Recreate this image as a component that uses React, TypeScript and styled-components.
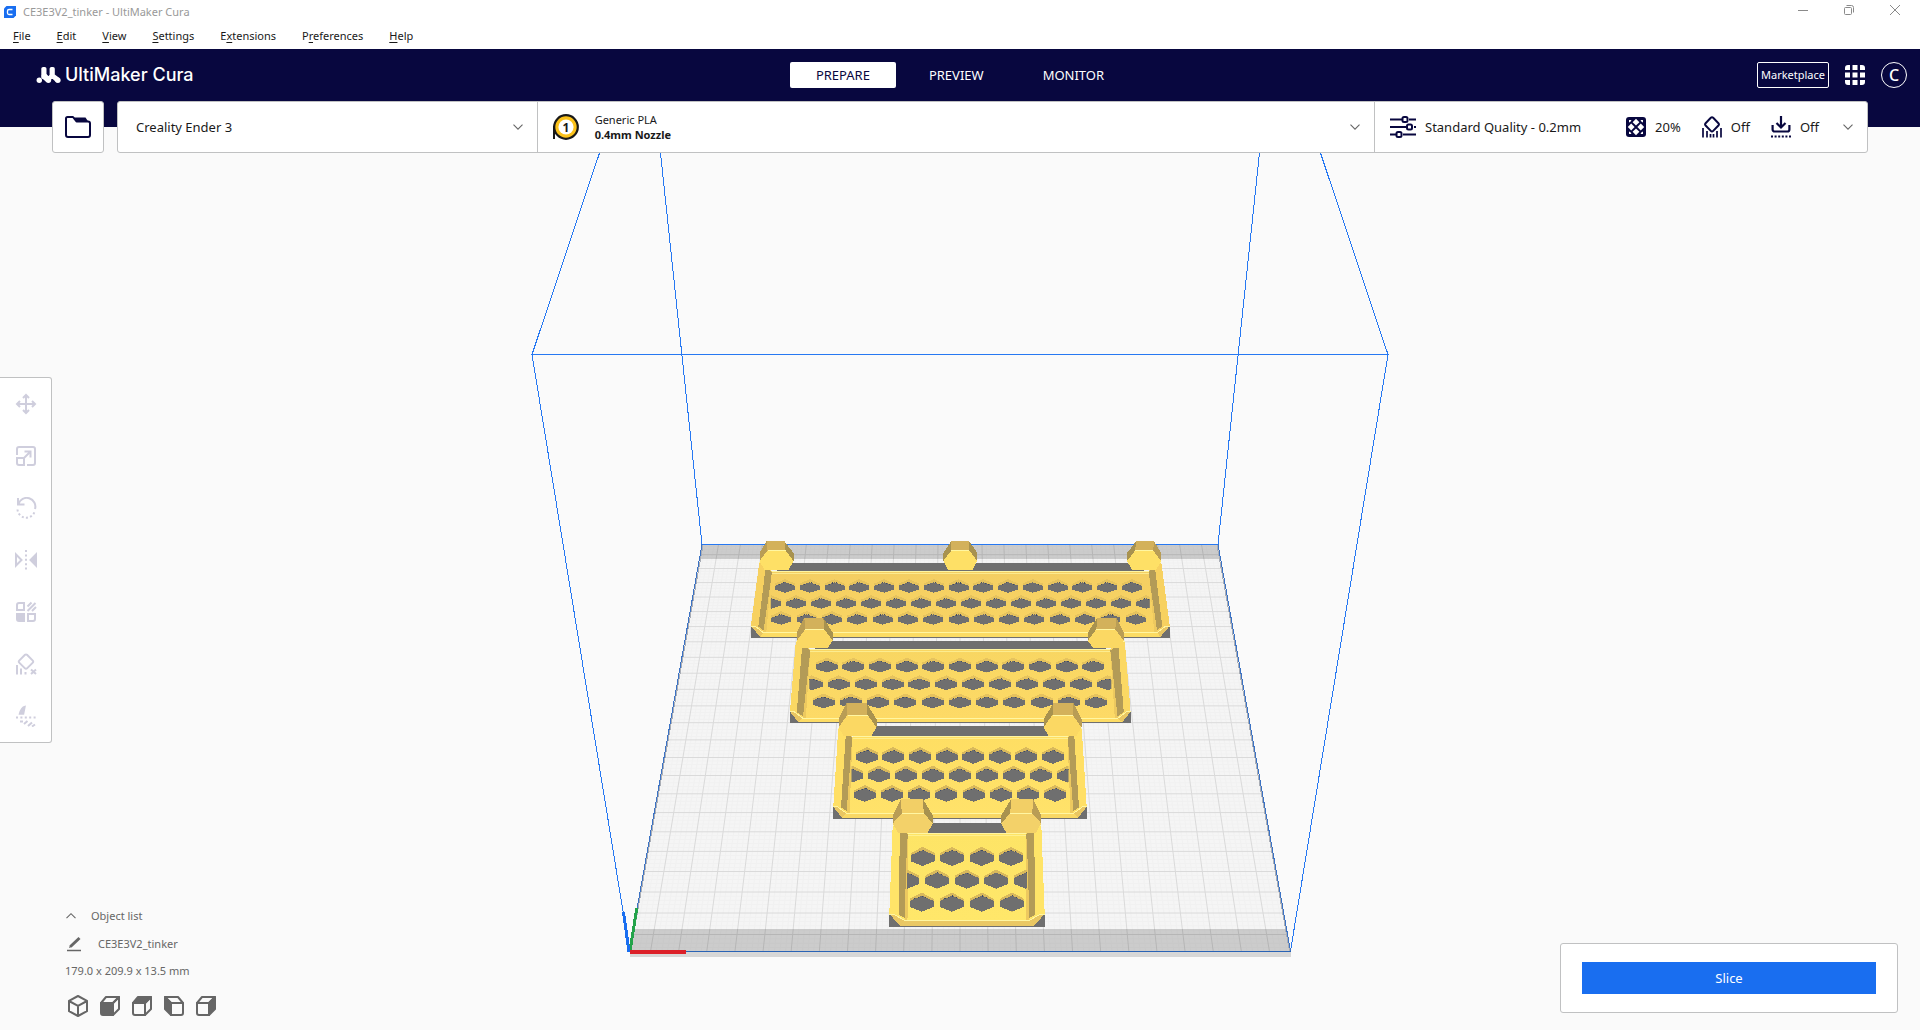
import React from "react";
import styled, { createGlobalStyle } from "styled-components";

const navy = "#08073f";
const blue = "#196ef0";
const line = "#c0c1c2";
const muted = "#666666";
const disabled = "#cfcedd";

const Global = createGlobalStyle`
  * { box-sizing: border-box; }
  body { margin: 0; background: #fafafa; }
  button { font: inherit; color: inherit; margin: 0; padding: 0; border: 0; background: none; cursor: pointer; }
  svg { display: block; flex: none; }
`;

const Page = styled.div`
  display: flex;
  flex-direction: column;
  min-height: 100vh;
  font-family: "Noto Sans", "Open Sans", sans-serif;
  font-size: 11px;
  line-height: 16px;
  color: #191919;
`;

/* ---------- window frame ---------- */

const TitleBar = styled.div`
  display: flex;
  align-items: center;
  height: 23px;
  padding-left: 4px;
  gap: 7px;
  background: #fff;
  color: #999;
`;

const WindowTitle = styled.span`
  flex: 1;
`;

const WindowButton = styled.button`
  display: grid;
  place-items: center;
  width: 39px;
  height: 20px;
  color: #8a8a8a;
`;

const WindowButtons = styled.div`
  display: flex;
  align-self: flex-start;
  gap: 7px;
  padding-right: 6px;
`;

const MenuBar = styled.nav`
  display: flex;
  height: 26px;
  background: #fff;
`;

const MenuItem = styled.button`
  padding: 0 13px;
  u { text-underline-offset: 2px; }
`;

/* ---------- header ---------- */

const Header = styled.header`
  display: grid;
  grid-template-columns: 1fr auto 1fr;
  align-items: center;
  height: 52px;
  padding: 0 13px;
  background: ${navy};
  color: #fff;
`;

const Brand = styled.div`
  display: flex;
  align-items: center;
  gap: 3px;
  padding-left: 23px;
  font-family: Inter, "Noto Sans", sans-serif;
  font-size: 18px;
  font-weight: 500;
  line-height: 28px;
`;

const Tabs = styled.nav`
  display: flex;
  gap: 7px;
`;

const Tab = styled.button<{ $active?: boolean }>`
  height: 26px;
  padding: 0 26px;
  border-radius: 2px;
  font-size: 13px;
  background: ${(p) => (p.$active ? "#fff" : "transparent")};
  color: ${(p) => (p.$active ? navy : "#fff")};
`;

const Account = styled.div`
  display: flex;
  justify-content: flex-end;
  gap: 13px;
`;

const Marketplace = styled.button`
  width: 72px;
  height: 26px;
  border: 1px solid #fff;
  border-radius: 2px;
`;

const RoundButton = styled.button<{ $ring?: boolean }>`
  display: grid;
  place-items: center;
  width: 26px;
  height: 26px;
  border-radius: 50%;
  border: ${(p) => (p.$ring ? "1px solid #fff" : "0")};
  font-size: 16px;
  font-weight: 500;
`;

/* ---------- stage bar ---------- */

const StageRow = styled.div`
  display: flex;
  gap: 13px;
  padding: 0 52px;
  background: linear-gradient(${navy} 26px, #fafafa 26px);
`;

const OpenButton = styled.button`
  display: grid;
  place-items: center;
  width: 52px;
  height: 52px;
  background: #fff;
  border: 1px solid ${line};
  border-radius: 3px;
`;

const StageBar = styled.div`
  display: grid;
  grid-template-columns: 1fr 2fr 493px;
  flex: 1;
  height: 52px;
  background: #fff;
  border: 1px solid ${line};
  border-radius: 3px;
`;

const Selector = styled.button<{ $pad: number; $gap?: number }>`
  display: flex;
  align-items: center;
  gap: ${(p) => p.$gap ?? 0}px;
  padding: 0 13px 0 ${(p) => p.$pad}px;
  text-align: left;
  font-size: 13px;
  & + & { border-left: 1px solid ${line}; }
`;

const Grow = styled.span`
  flex: 1;
`;

const Material = styled.span`
  flex: 1;
  font-size: 11px;
  line-height: 15px;
  strong { display: block; font-weight: 700; }
`;

const Settings = styled.span`
  display: flex;
  gap: 21px;
  margin-right: 14px;
`;

const Setting = styled.span`
  display: flex;
  align-items: center;
  gap: 9px;
`;

/* ---------- viewport ---------- */

const Viewport = styled.main`
  position: relative;
  display: flex;
  flex: 1;
  justify-content: space-between;
  min-height: 640px;
  background: #fafafa;
`;

const SceneSvg = styled.svg`
  position: absolute;
  inset: 0;
  width: 100%;
  height: 100%;
`;

const LeftColumn = styled.div`
  position: relative;
  display: flex;
  flex-direction: column;
  align-items: flex-start;
  justify-content: space-between;
  padding-top: 224px;
`;

const Toolbar = styled.div`
  display: flex;
  flex-direction: column;
  background: #fff;
  border: 1px solid ${line};
  border-left: 0;
  border-radius: 0 3px 3px 0;
`;

const Tool = styled.button`
  display: grid;
  place-items: center;
  width: 51px;
  height: 52px;
  color: ${disabled};
`;

const ObjectPanel = styled.section`
  display: flex;
  flex-direction: column;
  align-items: flex-start;
  gap: 10px;
  padding: 0 0 11px 65px;
  color: ${muted};
`;

const ObjectRow = styled.button<{ $gap: number }>`
  display: flex;
  align-items: center;
  gap: ${(p) => p.$gap}px;
  height: 18px;
`;

const Views = styled.div`
  display: flex;
  gap: 6px;
  margin-top: 4px;
`;

const ViewButton = styled.button`
  display: grid;
  place-items: center;
  width: 26px;
  height: 26px;
`;

const SlicePanel = styled.section`
  position: relative;
  align-self: flex-end;
  width: 338px;
  margin: 0 22px 17px 0;
  padding: 18px 21px;
  background: #fff;
  border: 1px solid ${line};
  border-radius: 3px;
`;

const SliceButton = styled.button`
  display: block;
  width: 100%;
  height: 32px;
  background: ${blue};
  color: #fff;
  font-size: 13px;
`;

/* ---------- icons ---------- */

const Chevron = ({ up }: { up?: boolean }) => (
  <svg width="12" height="12" viewBox="0 0 12 12" fill="none" stroke={muted} strokeWidth="1.1">
    <path d={up ? "M1.5 8.2 6 3.7l4.5 4.5" : "M1.5 3.7 6 8.2l4.5-4.5"} />
  </svg>
);

const AppIcon = () => (
  <svg width="12" height="12" viewBox="0 0 12 12">
    <path d="M2.5 0H12v9.5L9.5 12H0V2.5z" fill={blue} />
    <path d="M8.500 3.500H5A1.500 1.500 0 0 0 3.500 5v2A1.500 1.500 0 0 0 5 8.500h3.500" fill="none" stroke="#fff" strokeWidth="1.3" />
  </svg>
);

const Logo = () => (
  <svg width="26" height="18" viewBox="0 0 26 18" fill="#fff">
    <circle cx="3.300" cy="14.300" r="2.700" />
    <rect x="5.300" y="1" width="5.200" height="12" rx="1.800" />
    <rect x="13.600" y="1" width="5.200" height="12" rx="1.800" />
    <circle cx="12.400" cy="14.300" r="2.700" />
    <circle cx="21.900" cy="14.300" r="2.700" />
    <path d="M5.300 9.500L10.500 8l3.300 3.800-3.500 4.200-4-3.500zM10.600 11.800L13.600 9h3l-1.500 5zM14.600 11L18.800 8.500l4.600 3.500-3 4.500z" />
  </svg>
);

const Apps = () => (
  <svg width="20" height="20" viewBox="0 0 20 20" fill="#fff">
    <path d="M3 0h2v5H0V3a3 3 0 0 1 3-3zM7.500 0h5v5h-5zM15 0h2a3 3 0 0 1 3 3v2h-5zM0 7.500h5v5H0zM7.500 7.500h5v5h-5zM15 7.500h5v5h-5zM0 15h5v5H3a3 3 0 0 1-3-3zM7.500 15h5v5h-5zM15 15h5v2a3 3 0 0 1-3 3h-2z" />
  </svg>
);

const Folder = () => (
  <svg width="26" height="22" viewBox="0 0 26 22">
    <path d="M1 2.500A1.500 1.500 0 0 1 2.500 1H8l3.500 4.500H23A2 2 0 0 1 25 7.500v11.500a2 2 0 0 1-2 2H3a2 2 0 0 1-2-2z" fill="#fff" stroke={navy} strokeWidth="2" strokeLinejoin="round" />
    <path d="M9 1.500h11.500l3 4.500H12z" fill={navy} />
  </svg>
);

const Spool = () => (
  <svg width="26" height="26" viewBox="0 0 26 26">
    <path d="M1 12v13" stroke="#191919" strokeWidth="2" />
    <circle cx="13" cy="13" r="11.800" fill="#fbc21b" stroke="#191919" strokeWidth="2.200" />
    <circle cx="13" cy="13" r="7.600" fill="#fff" />
    <text x="13" y="17.500" textAnchor="middle" fontSize="12" fontWeight="700" fill="#191919">1</text>
  </svg>
);

const Sliders = () => (
  <svg width="26" height="22" viewBox="0 0 26 22" fill="none" stroke={navy} strokeWidth="2">
    <path d="M0 3.500h12M19 3.500h7M0 11h16M24 11H26M0 18.500h6M13 18.500h13" />
    <rect x="12.500" y="1" width="5" height="5" rx="1.500" />
    <rect x="17" y="8.500" width="5" height="5" rx="1.500" />
    <rect x="6.500" y="16" width="5" height="5" rx="1.500" />
  </svg>
);

const Infill = () => (
  <svg width="20" height="20" viewBox="0 0 20 20">
    <rect width="20" height="20" rx="3" fill={navy} />
    <g fill="#fff">
      {[
        [10, 5.2, 3.4],
        [5.2, 10, 3.4],
        [14.8, 10, 3.4],
        [10, 14.8, 3.4],
      ].map(([x, y, r], i) => (
        <path key={i} d={`M${x} ${y - r}l${r} ${r}-${r} ${r}-${r}-${r}z`} />
      ))}
      <path d="M3 5.500V3h2.500l-1 1.800zM14.500 3H17v2.500l-1.500-.700zM3 14.500V17h2.500l-1-1.800zM17 14.500V17h-2.500l1-1.800z" />
    </g>
  </svg>
);

const Support = () => (
  <svg width="20" height="22" viewBox="0 0 20 22" fill="none" stroke={navy} strokeWidth="2">
    <path d="M8.800 1.800a1.700 1.700 0 0 1 2.400 0l5.200 5.400a1.700 1.700 0 0 1 0 2.300l-5.200 5.400a1.700 1.700 0 0 1-2.400 0L3.600 9.500a1.700 1.700 0 0 1 0-2.300z" />
    <path d="M1 12v9.500M5 15v6.500M8.500 18v3.500M11.500 18v3.500M15 15v6.500M19 12v9.500" strokeWidth="1.700" />
  </svg>
);

const Adhesion = () => (
  <svg width="20" height="22" viewBox="0 0 20 22" fill="none" stroke={navy} strokeWidth="2.200">
    <path d="M10 0v11M5.500 7l4.500 4.500L14.500 7M1.600 9v4.500a2 2 0 0 0 2 2h12.800a2 2 0 0 0 2-2V9" />
    <path d="M0 20.500h20" strokeWidth="1.900" strokeDasharray="2 1.600" />
  </svg>
);

const Svg20 = ({ children }: { children: React.ReactNode }) => (
  <svg width="22" height="22" viewBox="-1 -1 22 22" fill="none" stroke="currentColor" strokeWidth="2">
    {children}
  </svg>
);

const tools: [string, React.ReactNode][] = [
  ["Move", <path d="M10 1.500v17M1.500 10h17M7 4l3-3 3 3M7 16l3 3 3-3M4 7l-3 3 3 3M16 7l3 3-3 3" />],
  [
    "Scale",
    <>
      <path d="M1 9V3a2 2 0 0 1 2-2h14a2 2 0 0 1 2 2v14a2 2 0 0 1-2 2h-6" />
      <path d="M1 12h7v7H3a2 2 0 0 1-2-2zM8 12l6.500-6.500M8.500 5.500h6v6" />
    </>,
  ],
  [
    "Rotate",
    <>
      <path d="M2 0v6.500h6.500M2.500 6A8.500 8.500 0 0 1 19 11" />
      <path d="M1.500 11.500A8.800 8.800 0 0 0 18.500 14" strokeDasharray="2 2.200" />
    </>,
  ],
  [
    "Mirror",
    <>
      <path d="M0 4.500v11L5.500 10z" />
      <path d="M20 4.500v11L14.500 10z" fill="currentColor" />
      <path d="M10 0v20" strokeDasharray="2 2.400" />
    </>,
  ],
  [
    "Per model settings",
    <>
      <path d="M3 1h5v7H1V3a2 2 0 0 1 2-2zM12 12h7v5a2 2 0 0 1-2 2h-5z" />
      <path d="M3 12h5v7H3a2 2 0 0 1-2-2v-5z" fill="currentColor" />
      <path d="M11.500 4.500l4-4M11.500 9l8-8M16 9l4-4" />
    </>,
  ],
  [
    "Support blocker",
    <>
      <path d="M9 .800a1.400 1.400 0 0 1 2 0l5.800 5.800a1.400 1.400 0 0 1 0 2L11 14.400a1.400 1.400 0 0 1-2 0L3.200 8.600a1.400 1.400 0 0 1 0-2z" />
      <path d="M1 11v9.500M5 14.500v6M9.500 18v2.500M15 15.500l5 4.500M20 15.500L15 20" />
    </>,
  ],
  [
    "Split",
    <>
      <path d="M3.500 8C4.500 4 6.500 1 9 .500L7.500 8z" fill="currentColor" strokeWidth="1.5" />
      <path d="M0 11.500h20" strokeDasharray="2 2.400" />
      <path d="M4 15.500h3M8 18l3.500-3M12 20l4-3.500M16 20.500l3-2" />
    </>,
  ],
];

const viewNames = ["3D view", "Front view", "Top view", "Left view", "Right view"];

const Cube = ({ kind }: { kind: number }) => {
  if (kind === 0)
    return (
      <Svg20>
        <path d="M10 0l9 4.800v10.400L10 20l-9-4.800V4.800zM1 5l9 4.800L19 5M10 9.800V20" strokeLinejoin="round" />
      </Svg20>
    );
  const flip = kind === 3;
  return (
    <Svg20>
      <g transform={flip ? "matrix(-1 0 0 1 20 0)" : undefined} strokeLinejoin="round">
        <path d="M1 7h12v12H3a2 2 0 0 1-2-2z" fill={kind === 1 ? "currentColor" : "none"} />
        <path d="M1 7l5-6h13l-6 6z" fill={kind === 2 ? "currentColor" : "none"} />
        <path d="M13 7l6-6v12l-6 6z" fill={kind > 2 ? "currentColor" : "none"} />
      </g>
    </Svg20>
  );
};

/* ---------- 3D scene ---------- */

type Row = { y: number; from: number; to: number; n: number; ends?: boolean };
type Model = {
  cx: number;
  face: [string, string];
  rim: string;
  bevel: string;
  strip: number;
  rimTop: number;
  inTop: number;
  corner: number;
  inBottom: number;
  bottom: number;
  outer: [number, number];
  wallOut: [number, number];
  wallIn: [number, number];
  flat: number;
  hooks: number[];
  hookY: [number, number, number, number];
  hookW: [number, number];
  hole: [number, number];
  rows: Row[];
};

const models: Model[] = [
  {
    cx: 960.3, face: ["#f4ce62", "#f9d563"], rim: "#f7d160", bevel: "#fcdc63", strip: 563,
    rimTop: 562.3, inTop: 571, corner: 626, inBottom: 632.5, bottom: 637,
    outer: [201, 209.5], wallOut: [194.5, 202], wallIn: [188.5, 195], flat: 200,
    hooks: [-183.8, 0, 183.8], hookY: [541.3, 550.5, 561, 570], hookW: [9, 17],
    hole: [10, 5.2],
    rows: [
      { y: 587.5, from: 785, to: 1132, n: 15 },
      { y: 603.5, from: 796.3, to: 1121.3, n: 14, ends: true },
      { y: 619.5, from: 781.3, to: 1135.7, n: 15 },
    ],
  },
  {
    cx: 960.3, face: ["#f8d662", "#fdda66"], rim: "#fbd863", bevel: "#fddc64", strip: 641.3,
    rimTop: 641.3, inTop: 649.5, corner: 711.7, inBottom: 718.3, bottom: 722,
    outer: [164.5, 170.3], wallOut: [158, 163.5], wallIn: [150, 155.5], flat: 162,
    hooks: [-145.5, 145.5], hookY: [617.7, 629.3, 640.7, 647.7], hookW: [9.5, 18],
    hole: [11, 5.8],
    rows: [
      { y: 666.7, from: 826.7, to: 1093.3, n: 11 },
      { y: 684.3, from: 838.7, to: 1081, n: 10, ends: true },
      { y: 702.5, from: 823.7, to: 1096, n: 11 },
    ],
  },
  {
    cx: 960, face: ["#fede63", "#ffe26a"], rim: "#ffdf65", bevel: "#f9d864", strip: 726,
    rimTop: 728, inTop: 736.7, corner: 806.7, inBottom: 813.3, bottom: 818,
    outer: [121.7, 126.7], wallOut: [114, 119], wallIn: [107.5, 111.5], flat: 118,
    hooks: [-102.5, 102.5], hookY: [703, 715, 727.3, 735.7], hookW: [10, 19],
    hole: [11, 6.8],
    rows: [
      { y: 757, from: 866.7, to: 1053, n: 8 },
      { y: 775.7, from: 879, to: 1040.7, n: 7, ends: true },
      { y: 795, from: 864.7, to: 1055.3, n: 8 },
    ],
  },
  {
    cx: 967, face: ["#fde466", "#ffe76a"], rim: "#ffe468", bevel: "#eac864", strip: 822.7,
    rimTop: 825, inTop: 833.3, corner: 914, inBottom: 920.3, bottom: 925.5,
    outer: [74.3, 77.7], wallOut: [67, 68.5], wallIn: [59, 60.5], flat: 67,
    hooks: [-54.2, 54.2], hookY: [799, 813.3, 823.3, 832.7], hookW: [11, 20],
    hole: [12, 8],
    rows: [
      { y: 858, from: 922.7, to: 1011, n: 4 },
      { y: 880.7, from: 937, to: 996.3, n: 3, ends: true },
      { y: 903.7, from: 921.7, to: 1012, n: 4 },
    ],
  },
];

const dark = "#6f6f6f";
const shine = "#fff6a2";

const hex = (x: number, y: number, w: number, h: number) =>
  `M${x} ${y - h}L${x + w} ${y - h * 0.35}V${y + h * 0.4}L${x} ${y + h}L${x - w} ${y + h * 0.4}V${y - h * 0.35}Z`;

const Hook = ({ x, m, i }: { x: number; m: Model; i: number }) => {
  const [t, f, mid, b] = m.hookY;
  const [n, w] = m.hookW;
  const off = x < m.cx - 5 ? -1 : x > m.cx + 5 ? 1 : 0;
  const topY = mid - 8;
  return (
    <g>
      <path d={`M${x - n + off} ${t}H${x + n + off}L${x + w} ${topY}V${mid}L${x + w - 5} ${b}H${x - w + 5}L${x - w} ${mid}V${topY}Z`} fill="#a8924f" />
      <path d={`M${x - n + off} ${t}H${x + n + off}L${x + n} ${f}H${x - n}Z`} fill={i === 3 ? "#f2cf66" : "#d3b15b"} />
      {off !== 0 && (
        <path d={`M${x + off * n + off} ${t}L${x + off * n} ${f}L${x + off * w} ${mid}V${topY}Z`} fill="#b99d55" />
      )}
      <path d={`M${x - n} ${f}H${x + n}L${x + w} ${mid}L${x + w - 5} ${b}H${x - w + 5}L${x - w} ${mid}Z`} fill={i === 0 ? "#fee066" : i === 3 ? "#f3d169" : "#fbd863"} />
      <path d={`M${x - n} ${f}H${x + n}`} stroke={shine} strokeWidth="1" />
    </g>
  );
};

const Part = ({ m, i }: { m: Model; i: number }) => {
  const { cx } = m;
  const [o1, o2] = m.outer;
  const [hw, hh] = m.hole;
  const first = Math.abs(m.hooks[0]);
  const inner = m.wallIn[0];
  const foot = m.wallIn[1] + 2;
  const wall = (s: number) =>
    `M${cx + s * m.wallOut[0]} ${m.inTop - 5}L${cx + s * inner} ${m.inTop + 1}L${cx + s * m.wallIn[1]} ${m.inBottom - 1}L${cx + s * m.wallOut[1]} ${m.inBottom - 6}Z`;
  const lip = (s: number) =>
    `M${cx + s * inner} ${m.inTop + 1}L${cx + s * (m.wallIn[1] - 1)} ${m.inBottom}H${cx + s * foot}L${cx + s * (inner + 1)} ${m.inTop + 10}Z`;
  return (
    <g>
      <path d={`M${cx - o2} ${m.corner}H${cx + o2}V${m.bottom + 1}H${cx - o2}Z`} fill={dark} />
      <path d={`M${cx - first} ${m.strip}H${cx + first}V${m.inTop}H${cx - first}Z`} fill={dark} />
      <path
        d={`M${cx - o1} ${m.rimTop}H${cx - m.wallOut[0]}L${cx - inner} ${m.inTop}H${cx + inner}L${cx + m.wallOut[0]} ${m.rimTop}H${cx + o1}L${cx + o2} ${m.corner}L${cx + m.flat} ${m.bottom}H${cx - m.flat}L${cx - o2} ${m.corner}Z`}
        fill={m.rim}
      />
      <path d={`M${cx - foot} ${m.inBottom}H${cx + foot}L${cx + m.flat} ${m.bottom}H${cx - m.flat}Z`} fill={m.bevel} />
      <path
        d={`M${cx - inner} ${m.inTop}H${cx + inner}L${cx + m.wallIn[1]} ${m.inBottom}H${cx - m.wallIn[1]}Z`}
        fill={`url(#face${i})`}
      />
      <path d={wall(-1)} fill="#b39b57" />
      <path d={wall(1)} fill="#b39b57" />
      <path d={lip(-1)} fill="#edc95f" />
      <path d={lip(1)} fill="#edc95f" />
      <path d={`M${cx - m.flat} ${m.bottom}L${cx - o2} ${m.corner}H${cx - o2 + 4}L${cx - foot} ${m.inBottom}Z`} fill="#e9c662" />
      <path d={`M${cx + m.flat} ${m.bottom}L${cx + o2} ${m.corner}H${cx + o2 - 4}L${cx + foot} ${m.inBottom}Z`} fill="#e9c662" />
      <path
        d={`M${cx - inner} ${m.inTop}H${cx + inner}M${cx - o2} ${m.corner}h4L${cx - foot} ${m.inBottom}H${cx + foot}L${cx + o2 - 4} ${m.corner}h4M${cx - o1} ${m.rimTop}h7M${cx + o1} ${m.rimTop}h-7`}
        fill="none" stroke={shine} strokeWidth="1"
      />
      <path d={`M${cx - inner} ${m.inTop + 2}H${cx + inner}`} stroke={shine} strokeWidth="1" opacity=".7" />
      <clipPath id={`inner${i}`}>
        <path d={`M${cx - inner - 1} ${m.inTop}H${cx + inner + 1}V${m.inBottom}H${cx - inner - 1}Z`} />
      </clipPath>
      <g clipPath={`url(#inner${i})`}>
        {m.rows.map((r) => {
          const step = (r.to - r.from) / (r.n - 1);
          const xs = Array.from({ length: r.n }, (_, k) => r.from + step * k);
          if (r.ends) xs.push(r.from - step, r.to + step);
          return xs.map((x) => (
            <g key={x}>
              <path d={hex(x, r.y - 1.5, hw, hh + 1.7)} fill={i < 2 ? "#e6c35e" : "#d9b95c"} />
              <path d={hex(x, r.y, hw, hh)} fill={dark} />
              <path d={`M${x - hw * 0.6} ${r.y - hh * 0.6}L${x} ${r.y - hh}L${x + hw * 0.6} ${r.y - hh * 0.6}`} stroke="#3f4a63" strokeWidth="1" strokeDasharray="1 3" fill="none" />
            </g>
          ));
        })}
      </g>
      {m.hooks.map((h) => (
        <Hook key={h} x={cx + h} m={m} i={i} />
      ))}
    </g>
  );
};

/* Perspective of the build plate: millimetres from its centre to scene units. */
const project = (x: number, y: number): [number, number] => {
  const s = 1 / (0.35552 + (0.09991 * (y + 117.5)) / 235);
  return [960 + x * s, -901.8 + 658.7 * s];
};
const seg = (a: [number, number], b: [number, number]) => `M${a[0].toFixed(1)} ${a[1].toFixed(1)}L${b[0].toFixed(1)} ${b[1].toFixed(1)}`;
const cross = (v: number) =>
  seg(project(v, -117.5), project(v, 117.5)) + seg(project(-117.5, v), project(117.5, v));
const grid = Array.from({ length: 23 }, (_, k) => (k - 11) * 10).map(cross).join("");
const fine = Array.from({ length: 118 }, (_, k) => (k - 59) * 2)
  .filter((v) => v % 10 !== 0 && Math.abs(v) < 117)
  .map(cross)
  .join("");

const Scene = () => (
  <SceneSvg viewBox="0 153 1920 877" preserveAspectRatio="xMidYMid slice" shapeRendering="crispEdges" role="img" aria-label="Build plate">
    <defs>
      {models.map((m, i) => (
        <linearGradient key={i} id={`face${i}`} x1="0" x2="0" y1="0" y2="1">
          <stop offset="0" stopColor={m.face[0]} />
          <stop offset="1" stopColor={m.face[1]} />
        </linearGradient>
      ))}
    </defs>
    <path d="M702 545H1218L1290.500 951H629.500Z" fill="#f5f5f5" />
    <path d={fine} stroke="#f1f1f1" strokeWidth="1" shapeRendering="auto" />
    <path d={grid} stroke="#dadada" strokeWidth="1" shapeRendering="auto" />
    <path d="M702 545H1218L1220.500 559H699.500ZM633.400 929H1286.600L1290.500 951H629.500Z" fill="#000" opacity=".165" />
    <path d="M629.500 952H1290.500V957H629.500Z" fill="#d7d7d7" />
    <path d="M703 545L630.500 951M1217 545L1289.500 951" stroke="#a9adb5" strokeWidth="1" />
    <g fill="none" stroke="#2678f2" strokeWidth="1">
      <path d="M599.500 153L532 354.500H1388L1320.500 153" />
      <path d="M660.500 153L702 544.500M1259.500 153L1218 544.500" />
      <path d="M532 354.500L629.500 951M1388 354.500L1290.500 951" />
      <path d="M702 544.500L629.500 951M1218 544.500L1290.500 951" stroke="#3b72c4" />
      <path d="M702 544.500H1218" />
      <path d="M629.500 951.500H1290.500" stroke="#2a63b5" />
    </g>
    {models.map((m, i) => (
      <Part key={i} m={m} i={i} />
    ))}
    <path d="M630 951L636.800 908" stroke="#23a34a" strokeWidth="3" />
    <path d="M629 952L623.500 912" stroke={blue} strokeWidth="3" />
    <path d="M630 952H686" stroke="#dc1f28" strokeWidth="4" />
  </SceneSvg>
);

/* ---------- page ---------- */

const menus: [string, string, string][] = [
  ["", "F", "ile"],
  ["", "E", "dit"],
  ["", "V", "iew"],
  ["", "S", "ettings"],
  ["E", "x", "tensions"],
  ["P", "r", "eferences"],
  ["", "H", "elp"],
];

export default function App() {
  return (
    <Page>
      <Global />
      <TitleBar>
        <AppIcon />
        <WindowTitle>CE3E3V2_tinker - UltiMaker Cura</WindowTitle>
        <WindowButtons>
          <WindowButton aria-label="Minimize">
            <svg width="10" height="10" viewBox="0 0 10 10" stroke="currentColor"><path d="M0 5.500h10" /></svg>
          </WindowButton>
          <WindowButton aria-label="Restore">
            <svg width="10" height="10" viewBox="0 0 10 10" fill="none" stroke="currentColor">
              <rect x=".5" y="2.5" width="7" height="7" rx="1" />
              <path d="M2.500 .500h5a2 2 0 0 1 2 2v5" />
            </svg>
          </WindowButton>
          <WindowButton aria-label="Close">
            <svg width="10" height="10" viewBox="0 0 10 10" stroke="currentColor"><path d="M0 0l10 10M10 0L0 10" /></svg>
          </WindowButton>
        </WindowButtons>
      </TitleBar>
      <MenuBar>
        {menus.map(([a, u, b]) => (
          <MenuItem key={b}>{a}<u>{u}</u>{b}</MenuItem>
        ))}
      </MenuBar>
      <Header>
        <Brand><Logo />UltiMaker Cura</Brand>
        <Tabs>
          <Tab $active>PREPARE</Tab>
          <Tab>PREVIEW</Tab>
          <Tab>MONITOR</Tab>
        </Tabs>
        <Account>
          <Marketplace>Marketplace</Marketplace>
          <RoundButton aria-label="Applications"><Apps /></RoundButton>
          <RoundButton $ring>C</RoundButton>
        </Account>
      </Header>
      <StageRow>
        <OpenButton aria-label="Open file"><Folder /></OpenButton>
        <StageBar>
          <Selector $pad={18}><Grow>Creality Ender 3</Grow><Chevron /></Selector>
          <Selector $pad={15} $gap={16}>
            <Spool />
            <Material>Generic PLA<strong>0.4mm Nozzle</strong></Material>
            <Chevron />
          </Selector>
          <Selector $pad={15} $gap={9}>
            <Sliders />
            <Grow>Standard Quality - 0.2mm</Grow>
            <Settings>
              <Setting><Infill />20%</Setting>
              <Setting><Support />Off</Setting>
              <Setting><Adhesion />Off</Setting>
            </Settings>
            <Chevron />
          </Selector>
        </StageBar>
      </StageRow>
      <Viewport>
        <Scene />
        <LeftColumn>
          <Toolbar>
            {tools.map(([name, icon]) => (
              <Tool key={name} aria-label={name}><Svg20>{icon}</Svg20></Tool>
            ))}
          </Toolbar>
          <ObjectPanel>
            <ObjectRow $gap={14}><Chevron up />Object list</ObjectRow>
            <ObjectRow $gap={15}>
              <svg width="18" height="16" viewBox="0 0 18 16" stroke={muted} fill="none">
                <path d="M2 14.500h14" strokeWidth="1.500" />
                <path d="M5.500 10.500L14.500 2" strokeWidth="3" />
                <path d="M4 12l1-3 2 2z" fill={muted} stroke="none" />
              </svg>
              CE3E3V2_tinker
            </ObjectRow>
            <span>179.0 x 209.9 x 13.5 mm</span>
            <Views>
              {viewNames.map((name, i) => (
                <ViewButton key={name} aria-label={name}><Cube kind={i} /></ViewButton>
              ))}
            </Views>
          </ObjectPanel>
        </LeftColumn>
        <SlicePanel>
          <SliceButton>Slice</SliceButton>
        </SlicePanel>
      </Viewport>
    </Page>
  );
}
